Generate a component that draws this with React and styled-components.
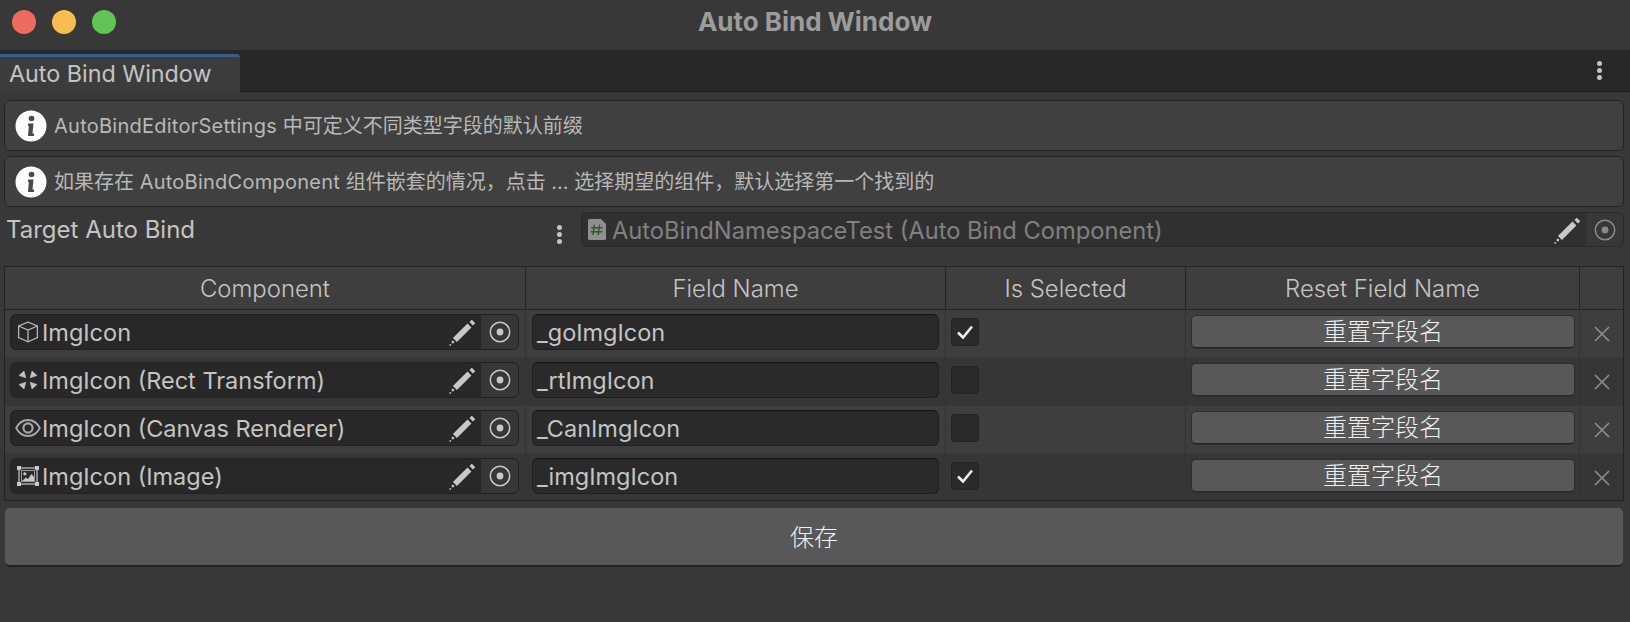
import React from "react";
import styled, { createGlobalStyle } from "styled-components";

const FONT = `Inter, "Noto Sans CJK SC", sans-serif`;
const COLUMNS = "521px 420px 240px 394px 1fr";

const GlobalStyle = createGlobalStyle`
  html, body {
    margin: 0;
    height: 100%;
    background: #383838;
    overflow: hidden;
  }
  * { box-sizing: border-box; }
`;

const Window = styled.div`
  width: 1630px;
  height: 622px;
  background: #383838;
  color: #c4c4c4;
  font-family: ${FONT};
  font-size: 23.5px;
  display: flex;
  flex-direction: column;
`;

const TitleBar = styled.header`
  height: 50px;
  flex: none;
  display: flex;
  align-items: center;
  position: relative;
  padding-left: 12px;
  padding-bottom: 6px;
  gap: 16px;
`;

const Light = styled.span`
  width: 24px;
  height: 24px;
  border-radius: 50%;
  background: ${(p) => p.$color};
`;

const WindowTitle = styled.h1`
  position: absolute;
  left: 0;
  right: 0;
  top: 7px;
  margin: 0;
  text-align: center;
  font-size: 26px;
  font-weight: 700;
  line-height: 30px;
  color: #9c9c9c;
`;

const TabStrip = styled.nav`
  height: 42px;
  flex: none;
  background: #282828;
  border-bottom: 1px solid #1f1f1f;
  display: flex;
  align-items: flex-end;
  justify-content: space-between;
  padding-right: 28px;
`;

const Tab = styled.div`
  width: 240px;
  height: 38px;
  background: #3c3c3c;
  border-top: 3px solid #3a5f8f;
  border-top-right-radius: 4px;
  margin-bottom: -1px;
  padding-left: 9px;
  font-size: 23.3px;
  line-height: 33px;
`;

const Dots = styled.div`
  display: flex;
  flex-direction: column;
  gap: 2px;
  align-self: center;
  span {
    width: 5px;
    height: 5px;
    border-radius: 50%;
    background: #c4c4c4;
  }
`;

const Content = styled.main`
  padding: 8px 6px 0 4px;
  display: flex;
  flex-direction: column;
`;

const HelpBox = styled.div`
  height: 51px;
  margin-bottom: 5px;
  background: #404040;
  border: 1.5px solid #232323;
  border-radius: 6px;
  display: flex;
  align-items: center;
  padding-left: 10px;
  gap: 7px;
  font-size: 20px;
  color: #b8b8b8;
  white-space: pre;
`;

const HelpText = styled.span`
  position: relative;
  top: -1px;
`;

const Term = styled.span`
  letter-spacing: 0.25px;
`;

const TargetRow = styled.div`
  height: 35px;
  margin-bottom: 19px;
  display: grid;
  grid-template-columns: 577px 1fr;
`;

const TargetLabel = styled.div`
  display: flex;
  align-items: center;
  justify-content: space-between;
  padding: 0 19px 0 2px;
  font-size: 24px;
  ${Dots} {
    margin-top: 10px;
  }
`;

const ObjectField = styled.div`
  height: ${(p) => (p.$disabled ? 35 : 36)}px;
  display: flex;
  align-items: center;
  background: ${(p) => (p.$disabled ? "#303030" : "#282828")};
  border: 1.5px solid ${(p) => (p.$disabled ? "#2a2a2a" : "#212121")};
  border-radius: 6px;
  padding-left: ${(p) => (p.$disabled ? 6 : 3)}px;
  color: ${(p) => (p.$disabled ? "#808080" : "#c4c4c4")};
  font-size: ${(p) => (p.$disabled ? 23.7 : 23.5)}px;
  overflow: hidden;
`;

const FieldLabel = styled.span`
  flex: 1;
  padding-top: ${(p) => (p.$disabled ? 1 : 0)}px;
  white-space: nowrap;
`;

const IconSlot = styled.span`
  width: ${(p) => p.$width || 28}px;
  height: 28px;
  flex: none;
  display: flex;
  align-items: center;
  justify-content: ${(p) => p.$align || "center"};
`;

const PencilSlot = styled.span`
  width: 32px;
  display: flex;
  align-items: center;
  justify-content: flex-start;
`;

const Picker = styled.span`
  width: 37px;
  height: 100%;
  flex: none;
  display: flex;
  align-items: center;
  justify-content: center;
  background: #373737;
`;

const Table = styled.section`
  height: 235px;
  overflow: hidden;
  border: 1.5px solid #222222;
  margin-bottom: 7px;
`;

const HeaderRow = styled.div`
  display: grid;
  grid-template-columns: ${COLUMNS};
  height: 43px;
  background: #3e3e3e;
  border-bottom: 1.5px solid #252525;
`;

const HeaderCell = styled.div`
  display: flex;
  align-items: center;
  justify-content: center;
  font-size: 23.9px;
  font-weight: 300;
  border-right: ${(p) => (p.$last ? "none" : "1.5px solid #252525")};
`;

const Row = styled.div`
  display: grid;
  grid-template-columns: ${COLUMNS};
  height: 48px;
  background: ${(p) => (p.$odd ? "#3e3e3e" : "#363636")};
`;

const Cell = styled.div`
  padding: 4px 6px 0 ${(p) => p.$left ?? 6}px;
  border-right: 1.5px solid #333333;
`;

const TextField = styled.div`
  height: 36px;
  background: #2a2a2a;
  border: 1.5px solid #1f1f1f;
  border-top-color: #121212;
  border-radius: 6px;
  padding-left: 4px;
  line-height: 35px;
`;

const Checkbox = styled.span`
  width: 28px;
  height: 28px;
  margin-top: 4px;
  display: flex;
  align-items: center;
  justify-content: center;
  background: #2a2a2a;
  border: 1.5px solid #222222;
  border-radius: 4px;
`;

const ResetButton = styled.button`
  display: block;
  width: 382px;
  height: 32px;
  margin-top: 2px;
  padding: 0;
  background: #585858;
  border: none;
  border-bottom: 1px solid #262626;
  border-radius: 4px;
  box-shadow: 0 0 0 1px #2e2e2e;
  color: #f0f0f0;
  font-family: ${FONT};
  font-size: 24px;
  font-weight: 300;
  line-height: 30px;
`;

const RemoveCell = styled.div`
  display: flex;
  align-items: center;
  justify-content: center;
  padding-left: 1px;
`;

const SaveButton = styled.button`
  height: 59px;
  margin: 0 1px;
  padding: 0 0 2px;
  background: #585858;
  border: none;
  border-bottom: 2px solid #222222;
  border-radius: 5px;
  color: #f0f0f0;
  font-family: ${FONT};
  font-size: 24px;
  font-weight: 300;
`;

const InfoIcon = () => (
  <svg width="32" height="32" viewBox="0 0 32 32">
    <defs>
      <filter id="soft">
        <feGaussianBlur stdDeviation="0.6" />
      </filter>
    </defs>
    <g filter="url(#soft)">
      <circle cx="16" cy="16" r="15.5" fill="#fff" />
      <circle cx="16.5" cy="8.5" r="2.8" fill="#4a4a4a" />
      <path d="M13 13.5h5.5l-1 10h1.5v2.5h-6l.8-10h-.8z" fill="#4a4a4a" />
    </g>
  </svg>
);

const Pencil = ({ color = "#c8c8c8" }) => (
  <svg width="28" height="28" viewBox="0 0 26 26">
    <path d="M5.5 20.5 19 7" stroke={color} strokeWidth="5.2" fill="none" />
    <path d="M21.2 1.6l3.2 3.2-2.2 2.2-3.2-3.2z" fill={color} />
    <circle cx="3.6" cy="22.4" r="1.2" fill={color} />
    <circle cx="1.2" cy="25" r="0.8" fill={color} />
  </svg>
);

const Target = ({ color = "#c8c8c8" }) => (
  <svg width="22" height="22" viewBox="0 0 22 22">
    <circle cx="11" cy="11" r="9.7" fill="none" stroke={color} strokeWidth="1.5" />
    <circle cx="11" cy="11" r="3.4" fill={color} />
  </svg>
);

const Cube = () => (
  <svg width="22" height="22" viewBox="0 0 22 22" fill="none" stroke="#b4b4b4" strokeWidth="1.3">
    <path d="M11 1.2 20.4 5v11.6L11 20.8 1.6 16.6V5z" />
    <path d="M1.6 5 11 9l9.4-4M11 9v11.8" />
  </svg>
);

const RectTransform = () => (
  <svg width="20" height="20" viewBox="0 0 20 20" fill="#c4c4c4" stroke="#c4c4c4" strokeWidth="0.6" strokeLinejoin="round">
    <path d="M1 5.5 6 1 7.8 7.8z" />
    <path d="M19 5.5 14 1 12.2 7.8z" />
    <path d="M1 14.5 6 19 7.8 12.2z" />
    <path d="M19 14.5 14 19 12.2 12.2z" />
  </svg>
);

const Eye = () => (
  <svg width="26" height="20" viewBox="0 0 26 20" fill="none" stroke="#a8a8a8" strokeWidth="1.8">
    <path d="M1.2 10C4 4.5 8 2 13 2s9 2.5 11.8 8C22 15.5 18 18 13 18S4 15.5 1.2 10z" />
    <circle cx="13" cy="10" r="4.6" strokeWidth="2.2" />
  </svg>
);

const ImageIcon = () => (
  <svg width="22" height="20" viewBox="0 0 22 20">
    <rect x="2" y="2" width="18" height="16" fill="none" stroke="#c8c8c8" strokeWidth="1.2" />
    <rect x="4.5" y="4.5" width="13" height="11" fill="#2c2c2c" stroke="#9a9a9a" strokeWidth="1" />
    <path d="M5 15 9 11.5l2 1.5 3.5-5 2.5 3V15z" fill="#c8c8c8" />
    <circle cx="7.8" cy="7.8" r="1.6" fill="#c8c8c8" />
    <path d="M0 0h4v4H0zM18 0h4v4h-4zM0 16h4v4H0zM18 16h4v4h-4z" fill="#c8c8c8" />
  </svg>
);

const ScriptIcon = () => (
  <svg width="18" height="21" viewBox="0 0 18 21">
    <path d="M1.5 0H13l5 5v14.5a1.5 1.5 0 0 1-1.5 1.5h-15A1.5 1.5 0 0 1 0 19.5v-18A1.5 1.5 0 0 1 1.5 0z" fill="#8f8f8f" />
    <path
      d="M6.4 5.5 5 16M11.6 5.5 10.2 16M3.2 8.8h11.6M2.8 12.8h11.6"
      stroke="#2c5a2c"
      strokeWidth="1.4"
      fill="none"
    />
  </svg>
);

const Check = () => (
  <svg width="20" height="20" viewBox="0 0 20 20">
    <path d="M3 10.5 8 15.5 17 4.5" fill="none" stroke="#f0f0f0" strokeWidth="2.6" />
  </svg>
);

const Close = () => (
  <svg width="16" height="16" viewBox="0 0 16 16">
    <path d="M1 1l14 14M15 1 1 15" stroke="#909090" strokeWidth="1.5" />
  </svg>
);

const rows = [
  { icon: <Cube />, name: "ImgIcon", field: "_goImgIcon", checked: true },
  { icon: <RectTransform />, name: "ImgIcon (Rect Transform)", field: "_rtImgIcon", checked: false },
  { icon: <Eye />, name: "ImgIcon (Canvas Renderer)", field: "_CanImgIcon", checked: false },
  { icon: <ImageIcon />, name: "ImgIcon (Image)", field: "_imgImgIcon", checked: true },
];

const MoreDots = () => (
  <Dots>
    <span />
    <span />
    <span />
  </Dots>
);

const App = () => {
  return (
    <Window>
      <GlobalStyle />
      <TitleBar>
        <Light $color="#ee6a5f" />
        <Light $color="#f5bd4f" />
        <Light $color="#61c454" />
        <WindowTitle>Auto Bind Window</WindowTitle>
      </TitleBar>
      <TabStrip>
        <Tab>Auto Bind Window</Tab>
        <MoreDots />
      </TabStrip>
      <Content>
        <HelpBox>
          <InfoIcon />
          <HelpText>
            <Term>AutoBindEditorSettings</Term> 中可定义不同类型字段的默认前缀
          </HelpText>
        </HelpBox>
        <HelpBox>
          <InfoIcon />
          <HelpText>
            如果存在 <Term>AutoBindComponent</Term> 组件嵌套的情况，点击 ... 选择期望的组件，默认选择第一个找到的
          </HelpText>
        </HelpBox>
        <TargetRow>
          <TargetLabel>
            Target Auto Bind
            <MoreDots />
          </TargetLabel>
          <ObjectField $disabled>
            <IconSlot $width={24} $align="flex-start">
              <ScriptIcon />
            </IconSlot>
            <FieldLabel $disabled>AutoBindNamespaceTest (Auto Bind Component)</FieldLabel>
            <PencilSlot>
              <Pencil />
            </PencilSlot>
            <Picker>
              <Target color="#8a8a8a" />
            </Picker>
          </ObjectField>
        </TargetRow>
        <Table>
          <HeaderRow>
            <HeaderCell>Component</HeaderCell>
            <HeaderCell>Field Name</HeaderCell>
            <HeaderCell>Is Selected</HeaderCell>
            <HeaderCell>Reset Field Name</HeaderCell>
            <HeaderCell $last />
          </HeaderRow>
          {rows.map((row, i) => (
            <Row key={row.name} $odd={i % 2 === 0}>
              <Cell $left={5}>
                <ObjectField>
                  <IconSlot>{row.icon}</IconSlot>
                  <FieldLabel>{row.name}</FieldLabel>
                  <PencilSlot>
                    <Pencil />
                  </PencilSlot>
                  <Picker>
                    <Target />
                  </Picker>
                </ObjectField>
              </Cell>
              <Cell>
                <TextField>{row.field}</TextField>
              </Cell>
              <Cell $left={5}>
                <Checkbox>{row.checked && <Check />}</Checkbox>
              </Cell>
              <Cell>
                <ResetButton>重置字段名</ResetButton>
              </Cell>
              <RemoveCell>
                <Close />
              </RemoveCell>
            </Row>
          ))}
        </Table>
        <SaveButton>保存</SaveButton>
      </Content>
    </Window>
  );
};

export default App;
